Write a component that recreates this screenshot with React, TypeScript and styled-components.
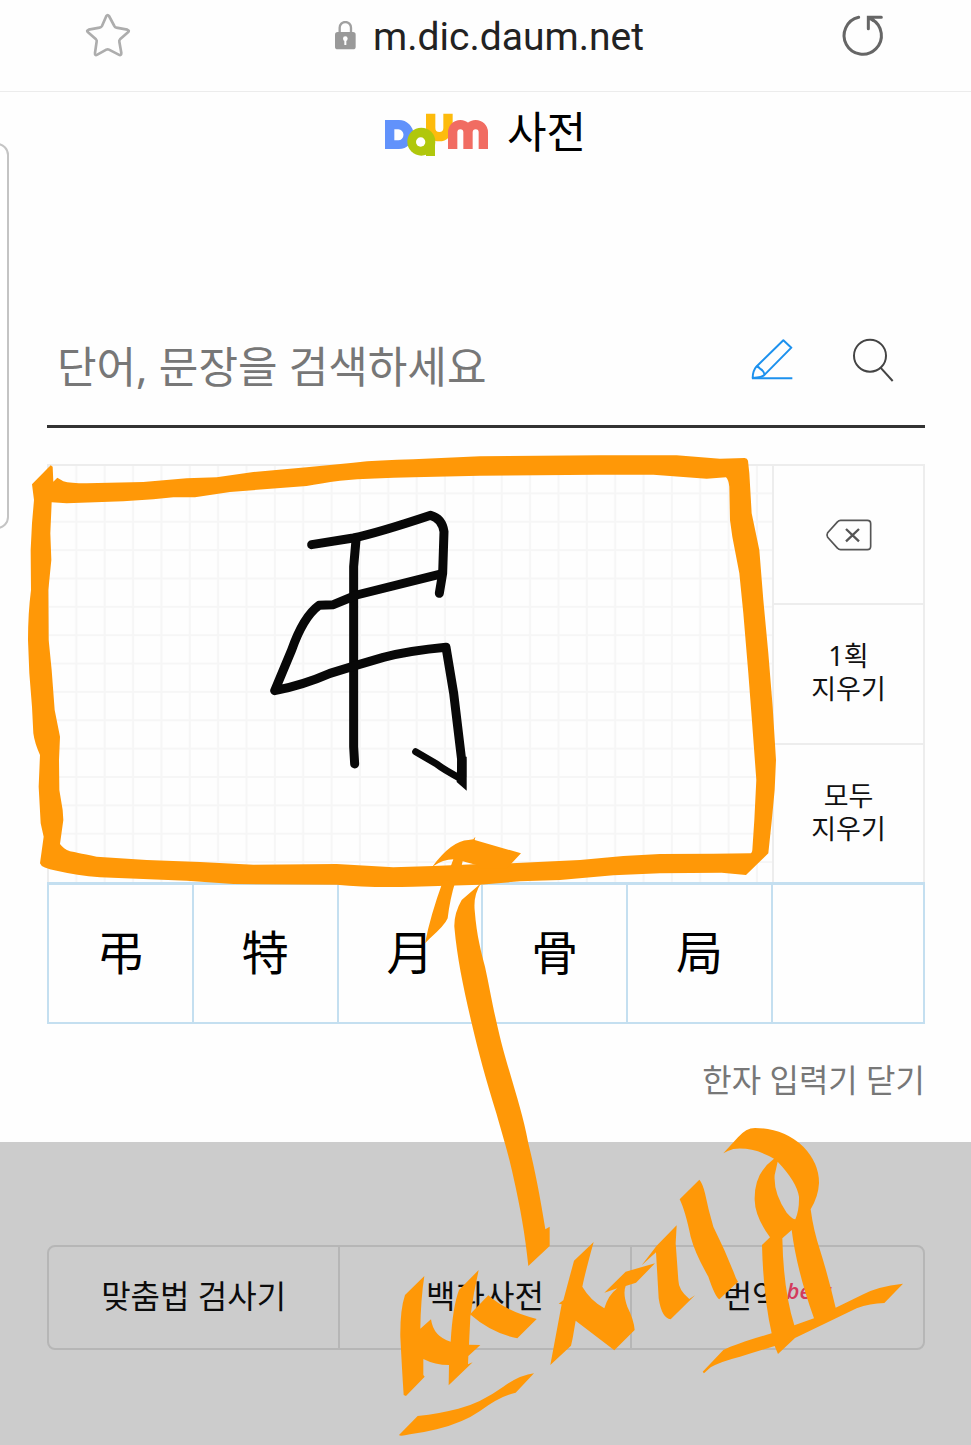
import React from "react";
import styled, { createGlobalStyle } from "styled-components";

const GlobalStyle = createGlobalStyle`
  *, *::before, *::after { box-sizing: border-box; }
  body {
    margin: 0;
    background: #fefefe;
    color: #111;
    font-family: "Noto Sans", "Noto Sans CJK KR", sans-serif;
  }
  button, input {
    margin: 0;
    padding: 0;
    border: 0;
    background: none;
    color: inherit;
    font: inherit;
  }
  button { cursor: pointer; }
  svg { display: block; flex: none; }
`;

const ink = "#ff9807";

const Page = styled.div`
  position: relative;
  display: flex;
  flex-direction: column;
  min-height: 100vh;
  overflow: hidden;
`;

const BrowserBar = styled.header`
  display: grid;
  grid-template-columns: 48px 1fr 48px;
  align-items: center;
  padding: 13px 84px 30px;
  border-bottom: 1px solid #ececec;
`;

const Address = styled.div`
  display: flex;
  align-items: center;
  justify-content: center;
  gap: 16px;
  padding-left: 6px;
  color: #222;
  font-family: Roboto, sans-serif;
  font-size: 39px;
  line-height: 48px;
`;

const EdgePanel = styled.div`
  position: absolute;
  top: 143px;
  left: -20px;
  width: 29px;
  height: 386px;
  border: 2px solid #c4c4c4;
  border-radius: 12px;
  background: #fff;
`;

const Brand = styled.h1`
  display: flex;
  align-items: center;
  justify-content: center;
  gap: 18px;
  margin: 10px 0 0;
  color: #000;
  font-size: 43px;
  font-weight: 400;
  line-height: 60px;
`;

const BrandName = styled.span`
  padding-bottom: 6px;
`;

const Content = styled.main`
  display: flex;
  flex-direction: column;
  padding: 0 46px 40px 47px;
`;

const SearchForm = styled.form`
  display: flex;
  align-items: center;
  gap: 53px;
  height: 120px;
  margin-top: 140px;
  padding: 0 28px 0 10px;
  border-bottom: 3px solid #333;
`;

const SearchInput = styled.input`
  flex: 1;
  min-width: 0;
  height: 64px;
  outline: none;
  font-size: 43px;
  &::placeholder { color: #777; opacity: 1; }
`;

const IconButton = styled.button`
  padding-bottom: 12px;
`;

const BarButton = styled.button`
  display: block;
`;

const Workspace = styled.section`
  display: grid;
  grid-template-columns: 1fr 151px;
  height: 418px;
  margin-top: 36px;
  border: 2px solid #ededed;
  border-bottom: 0;
`;

const DrawingPad = styled.svg`
  width: 100%;
  height: 100%;
`;

const KeyColumn = styled.div`
  display: grid;
  grid-template-rows: repeat(3, 1fr);
  border-left: 2px solid #ededed;
`;

const Key = styled.button`
  display: flex;
  align-items: center;
  justify-content: center;
  color: #111;
  font-size: 27px;
  line-height: 33px;
  &:first-child {
    padding-top: 2px;
    border-bottom: 2px solid #ededed;
  }
  &:last-child { border-top: 2px solid #ededed; }
`;

const KeyLabel = styled.span`
  padding-bottom: 4px;
`;

const Candidates = styled.div`
  display: grid;
  grid-template-columns: repeat(5, 1fr) 150px;
  height: 142px;
  border: 2px solid #c4dff0;
  border-top-width: 3px;
`;

const Candidate = styled.button`
  padding-bottom: 4px;
  color: #000;
  font-size: 47px;
  line-height: 60px;
  &:not(:last-child) { border-right: 2px solid #c4dff0; }
`;

const CloseButton = styled.button`
  align-self: flex-end;
  margin-top: 34px;
  color: #777;
  font-size: 32px;
  line-height: 44px;
`;

const Footer = styled.footer`
  flex: 1;
  padding: 103px 46px 95px 47px;
  background: #ccc;
`;

const ToolLinks = styled.nav`
  display: grid;
  grid-template-columns: repeat(3, 1fr);
  height: 105px;
  border: 2px solid #b6b6b6;
  border-radius: 8px;
`;

const ToolLink = styled.a`
  display: flex;
  align-items: center;
  justify-content: center;
  gap: 5px;
  padding-bottom: 4px;
  color: #0c0c0c;
  font-size: 32px;
  line-height: 44px;
  text-decoration: none;
  &:not(:last-child) { border-right: 2px solid #b6b6b6; }
`;

const Beta = styled.em`
  padding-bottom: 12px;
  color: #d33a5c;
  font-family: "Open Sans", sans-serif;
  font-size: 22px;
  font-weight: 600;
  line-height: 30px;
`;

const InkOverlay = styled.svg`
  position: absolute;
  top: 0;
  left: 0;
  width: 100%;
  height: auto;
  pointer-events: none;
`;

const StarIcon = () => (
  <svg width="48" height="48" viewBox="27 24 144 144" fill="none" stroke="#adadad" strokeWidth="8" strokeLinejoin="round">
    <path d="M94 33Q98 27 102 33L118 63Q119 67 124 68L157 74Q165 77 159 82L135 103Q132 106 133 110L139 144Q139 153 131 149L102 134Q98 132 94 134L67 149Q59 153 60 144L65 109Q66 106 63 103L39 82Q33 77 41 74L74 68Q79 67 81 63Z" />
  </svg>
);

const LockIcon = () => (
  <svg width="24" height="32" viewBox="36 34 72 96">
    <path d="M56 72V54a17 17 0 0 1 34 0V72" fill="none" stroke="#a0a0a0" strokeWidth="7" />
    <rect x="42" y="67" width="62" height="52" rx="8" fill="#999" />
    <circle cx="73" cy="87" r="7" fill="#fff" />
    <rect x="70" y="88" width="6" height="18" fill="#fff" />
  </svg>
);

const ReloadIcon = () => (
  <svg width="48" height="48" viewBox="27 24 144 144" fill="none" stroke="#666" strokeWidth="9" strokeLinecap="round">
    <path d="M86 37A56 56 0 1 0 126 43" />
    <path d="M154 37H115V71M117 39L130 46" />
  </svg>
);

const Logo = () => (
  <svg width="104" height="44" viewBox="42 39 312 132" role="img" aria-label="Daum">
    <path d="M179 41V84a26 26 0 0 0 52 0V41" fill="none" stroke="#fdbb0c" strokeWidth="28" />
    <path d="M42 60H84a43 43 0 0 1 0 87H42ZM70 88V121H82a15 16 0 0 0 0-33Z" fill="#6192fb" fillRule="evenodd" />
    <circle cx="151" cy="125" r="42" fill="#b0c70c" />
    <rect x="165" y="120" width="27" height="48" fill="#b0c70c" />
    <circle cx="149" cy="126" r="14" fill="#fff" />
    <path d="M245 147V97a23 23 0 0 1 46 0V147M291 97a23 23 0 0 1 46 0V147" fill="none" stroke="#f16c62" strokeWidth="28" />
  </svg>
);

const PenIcon = () => (
  <svg width="48" height="48" viewBox="54 48 144 144" fill="none" stroke="#1c91ee" strokeWidth="6" strokeLinejoin="round">
    <path d="M66 172H187" />
    <path d="M160 58L184 80L104 161Q98 169 68 171Q68 150 79 137Z" />
    <path d="M79 137Q86 136 90 143Q101 149 104 161" />
  </svg>
);

const SearchIcon = () => (
  <svg width="48" height="48" viewBox="357 48 144 144" fill="none" stroke="#444" strokeWidth="6">
    <circle cx="420" cy="104" r="48" />
    <path d="M451 139L488 180" />
  </svg>
);

const BackspaceIcon = () => (
  <svg width="48" height="32" viewBox="1035 239 144 96" fill="none" stroke="#555" strokeWidth="5">
    <path d="M1082 243H1162Q1172 243 1172 253V321Q1172 331 1162 331H1082Q1076 331 1073 327L1043 294Q1039 287 1043 280L1073 247Q1076 243 1082 243Z" />
    <path d="M1098 269L1137 306M1137 269L1098 306" strokeWidth="7" />
  </svg>
);

const Pad = () => (
  <DrawingPad viewBox="0 0 723 416" preserveAspectRatio="xMinYMin slice">
    <defs>
      <pattern id="grid" width="28.36" height="28.36" patternUnits="userSpaceOnUse">
        <path d="M27.3 0V28.36M0 27.3H28.36" stroke="#f6f6f6" strokeWidth="2" />
      </pattern>
    </defs>
    <rect width="100%" height="100%" fill="url(#grid)" />
    <g
      transform="translate(-29 -26) scale(0.33333)"
      fill="none"
      stroke="#080808"
      strokeWidth="27"
      strokeLinecap="round"
      strokeLinejoin="round"
    >
      <path d="M875 314L1000 294Q1070 280 1232 226Q1266 235 1272 275L1268 400L1258 460" />
      <path d="M1008 300L1001 380V920L1004 972" />
      <path d="M1258 403L1010 465L940 494L897 496Q850 530 815 630L764 752Q850 735 930 700Q1010 675 1090 652Q1170 632 1278 622L1301 760L1325 960V1010" />
      <path d="M1187 935L1250 972Q1270 988 1326 1018" strokeWidth="21" />
      <path d="M1312 950H1340V1052L1310 1026Z" fill="#080808" stroke="none" />
    </g>
  </DrawingPad>
);

const HandNotes = () => (
  <InkOverlay viewBox="0 0 971 1445" fill={ink} fillRule="evenodd" aria-hidden="true">
    {/* frame round the drawing pad */}
    <g transform="translate(20 440) scale(0.33333)">
      <path
        d="M92 76L36 133L42 180L36 250L32 330L33 450Q24 520 24 600Q26 700 36 800L40 880Q44 910 60 945L56 1040L62 1150L71 1190L60 1270Q64 1285 110 1292Q170 1306 240 1312L500 1322L640 1332L950 1334Q1050 1344 1180 1340L1380 1334L1500 1324L1620 1320L1780 1306L1920 1300L2105 1298L2178 1305L2245 1240Q2255 1150 2264 1050L2268 960L2258 800L2245 640L2230 480L2218 330L2195 220L2188 100L2184 62Q2182 54 2174 54L2100 56L1970 46L1740 46L1380 49L1180 58Q1080 60 1000 68L860 82L700 96L590 112L500 115L370 126L200 130Q150 130 130 124L112 113L100 125L98 80Z
           M95 187L140 190L310 184L400 178L460 172L525 172L630 156L860 138Q900 130 960 122Q1060 114 1180 112L1380 107L1730 104L1900 104L1980 110L2060 116L2118 112Q2126 120 2128 140L2130 240L2137 290L2158 400L2170 520L2185 700L2195 830L2209 1020L2203 1140L2197 1230Q2196 1240 2190 1240L2080 1241L1920 1242L1810 1248L1680 1260L1475 1270L1380 1272L1240 1278L1120 1282L950 1272L700 1274L540 1266L380 1260L230 1250Q160 1236 150 1234Q130 1226 120 1212L130 1140L128 1110L118 1050L117 960L120 890L104 810L95 690L86 600L85 450L94 360L91 280Z"
      />
    </g>
    {/* arrow pointing at the pad */}
    <g transform="translate(380 820) scale(0.33333)">
      <path d="M157 140Q215 62 265 60L280 58L286 50L284 60L423 100L395 130L380 145H300L290 135L248 124L243 145H210L220 118Q190 118 157 140Z" />
      <path d="M190 180L226 185Q210 235 203 295Q195 315 150 355L135 370Q150 290 190 180Z" />
      <path d="M303 190Q280 225 284 270C290 350 305 400 315 440C335 530 345 610 390 760C410 830 430 890 445 970C465 1050 482 1140 496 1228L509 1220V1278L445 1338C435 1240 420 1160 400 1070C385 1000 370 955 349 880C318 780 296 700 275 610C250 500 232 420 223 320Q222 280 245 240Z" />
    </g>
    {/* handwriting across the tool links */}
    <g transform="translate(380 1120) scale(0.33333)">
      <path d="M133 468L75 525Q60 570 61 650Q66 750 71 825L78 828L134 770L130 765V717Q165 735 207 735L206 796L278 727L264 733L265 708L301 675L267 674L271 590Q280 520 296 450L237 510Q218 560 212 665Q160 650 153 598L121 626Q122 540 133 468Z" />
      <path d="M270 583L325 526Q380 575 470 597L412 655Q335 640 270 583Z" />
      <path d="M462 760Q420 765 370 800Q300 850 235 866Q180 880 113 888L57 945Q60 950 90 943Q130 938 170 928Q250 908 300 873Q360 828 407 818Z" />
      <path d="M641 366L582 422L550 541L536 551L545 553L511 735L573 677L578 655L587 602L703 691L764 630Q762 600 742 560Q728 520 737 498L768 488L825 430L737 455L673 518L712 505Q685 525 673 565Q630 540 607 500Q615 460 641 366Z" />
    </g>
    <g transform="translate(640 1110) scale(0.33333)">
      <path d="M110 346L50 407L5 466L48 427L56 565Q65 625 92 628L165 556L148 567Q115 540 115 510L107 400Z" />
      <path d="M178 209L119 268Q135 300 152 380Q165 430 205 500Q225 560 238 568L294 515L288 505Q260 430 220 350Q205 300 195 250Q188 220 178 209Z" />
      <path
        d="M250 130L294 82Q318 54 345 54Q430 54 490 110Q538 160 537 220Q535 260 512 298Q520 360 540 420Q565 500 587 593L670 553Q710 530 789 521L733 579Q690 580 650 595L465 684L414 732L404 708Q350 725 300 740Q240 755 212 772L192 790L188 785L250 720Q290 700 395 670Q370 560 366 405L390 382Q345 320 344 270Q342 190 402 146Q340 110 280 117Q262 122 250 130Z
           M413 155Q470 215 477 260Q478 300 466 328Q458 328 440 308Q400 250 404 195Z
           M427 385L455 360Q470 480 522 625L463 646Q430 540 427 385Z"
      />
    </g>
  </InkOverlay>
);

const candidates = ["弔", "特", "月", "骨", "局"];

export default function App() {
  return (
    <Page>
      <GlobalStyle />
      <BrowserBar>
        <BarButton type="button" aria-label="즐겨찾기"><StarIcon /></BarButton>
        <Address><LockIcon /><span>m.dic.daum.net</span></Address>
        <BarButton type="button" aria-label="새로고침"><ReloadIcon /></BarButton>
      </BrowserBar>
      <EdgePanel />
      <Brand><Logo /><BrandName>사전</BrandName></Brand>
      <Content>
        <SearchForm role="search" onSubmit={(event) => event.preventDefault()}>
          <SearchInput type="text" aria-label="검색어" placeholder="단어, 문장을 검색하세요" />
          <IconButton type="button" aria-label="필기 입력"><PenIcon /></IconButton>
          <IconButton type="submit" aria-label="검색"><SearchIcon /></IconButton>
        </SearchForm>
        <Workspace>
          <Pad />
          <KeyColumn>
            <Key type="button" aria-label="지우기"><BackspaceIcon /></Key>
            <Key type="button"><KeyLabel>1획<br />지우기</KeyLabel></Key>
            <Key type="button"><KeyLabel>모두<br />지우기</KeyLabel></Key>
          </KeyColumn>
        </Workspace>
        <Candidates>
          {candidates.map((char) => (
            <Candidate key={char} type="button">{char}</Candidate>
          ))}
          <Candidate type="button" aria-label="빈 칸" />
        </Candidates>
        <CloseButton type="button">한자 입력기 닫기</CloseButton>
      </Content>
      <Footer>
        <ToolLinks>
          <ToolLink href="#spell">맞춤법 검사기</ToolLink>
          <ToolLink href="#encyclopedia">백과사전</ToolLink>
          <ToolLink href="#translate">번역<Beta>beta</Beta></ToolLink>
        </ToolLinks>
      </Footer>
      <HandNotes />
    </Page>
  );
}
